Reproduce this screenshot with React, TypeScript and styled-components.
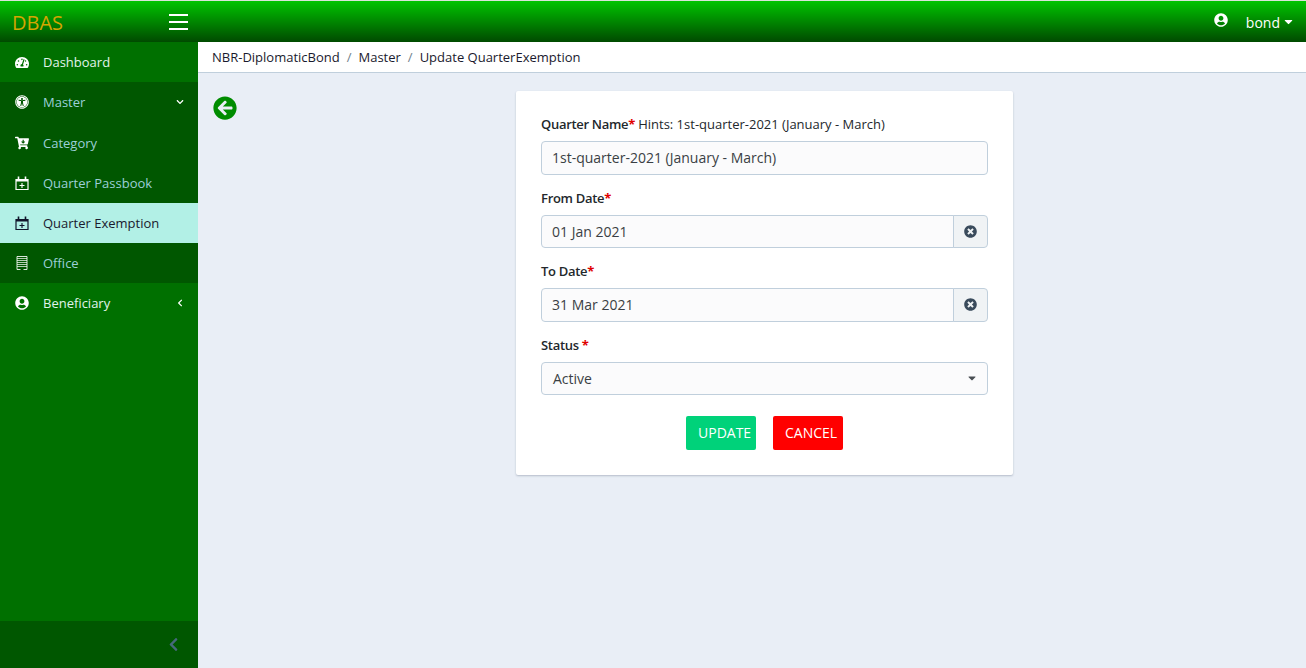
import React from 'react';
import styled, { createGlobalStyle } from 'styled-components';
import {
  FaArrowCircleLeft,
  FaCartArrowDown,
  FaCaretDown,
  FaChevronDown,
  FaChevronLeft,
  FaTachometerAlt,
  FaTimesCircle,
  FaUniversalAccess,
  FaUserCircle,
} from 'react-icons/fa';

const GlobalStyle = createGlobalStyle`
  * {
    box-sizing: border-box;
  }

  html,
  body {
    margin: 0;
    height: 100%;
    overflow: hidden;
  }

  body {
    background: #e9eef6;
    color: #23282c;
    font-family: 'Open Sans', sans-serif;
    font-size: 13px;
  }
`;

const Page = styled.div`
  display: flex;
  flex-direction: column;
  height: 668px;
`;

const Header = styled.header`
  display: flex;
  align-items: center;
  flex: 0 0 42px;
  border-top: 1px solid #d8e4d8;
  background: linear-gradient(to bottom, #00c400, #004a00);
`;

const Brand = styled.div`
  width: 169px;
  padding: 2px 0 0 12px;
  color: #d4a600;
  font-size: 20px;
`;

const Burger = styled.div`
  display: flex;
  flex-direction: column;
  gap: 5px;
  width: 19px;

  span {
    height: 2px;
    background: #fff;
  }
`;

const UserMenu = styled.div`
  display: flex;
  align-items: center;
  margin-left: auto;
  padding: 2px 11px 0 0;
  color: #fff;
  font-size: 14px;

  svg:first-child {
    margin: 0 18px 6px 0;
    font-size: 14px;
  }

  svg:last-child {
    margin: 0 0 2px 2px;
    font-size: 13px;
  }
`;

const Body = styled.div`
  display: flex;
  flex: 1;
  min-height: 0;
`;

const Sidebar = styled.aside`
  display: flex;
  flex-direction: column;
  flex: 0 0 198px;
  background: #007000;
`;

const NavItem = styled.div<{ $tone: 'plain' | 'dark' | 'active' }>`
  display: flex;
  align-items: center;
  height: 40px;
  padding: 0 14px 0 15px;
  background: ${(p) =>
    p.$tone === 'active' ? '#b2f0e6' : p.$tone === 'dark' ? '#005700' : 'transparent'};
  color: ${(p) =>
    p.$tone === 'active' ? '#1a1a2e' : p.$tone === 'dark' ? '#9ccfd8' : '#e0f4ec'};
  font-size: 13px;

  &:nth-child(3) {
    height: 41px;
    padding-top: 1px;
  }

  > svg:first-child {
    flex: 0 0 14px;
    margin-right: 14px;
    color: ${(p) => (p.$tone === 'active' ? '#10142a' : '#fff')};
    font-size: 14px;
  }

  > svg:last-child:not(:first-child) {
    margin-left: auto;
    color: #fff;
    font-size: 8px;
  }
`;

const DashboardIcon = styled(FaTachometerAlt)`
  && {
    flex: 0 0 15px;
    width: 15px;
    height: 15px;
    margin-right: 13px;
  }
`;

const Collapse = styled.div`
  display: flex;
  align-items: center;
  justify-content: flex-end;
  height: 47px;
  margin-top: auto;
  padding-right: 17px;
  background: #005700;
  color: #46687c;
  font-size: 15px;
`;

const Main = styled.main`
  display: flex;
  flex-direction: column;
  flex: 1;
  min-width: 0;
`;

const Breadcrumb = styled.nav`
  display: flex;
  align-items: center;
  flex: 0 0 31px;
  padding-left: 14px;
  border-bottom: 1px solid #c0cfdc;
  background: #fff;
  color: #1a1a2e;
  font-size: 13px;
`;

const Crumb = styled.span`
  & + &::before {
    content: '/';
    margin: 0 7px;
    color: #6f7f8c;
  }
`;

const Content = styled.div`
  display: grid;
  grid-template-columns: 303px 497px;
  padding: 18px 0 0 15px;
`;

const BackLink = styled.div`
  padding-top: 5px;
  color: #008c00;
  font-size: 24px;
  line-height: 0;
`;

const Card = styled.form`
  height: 384px;
  padding: 24px 25px 0;
  border-radius: 2px;
  background: #fff;
  box-shadow: 0 1px 2px rgba(60, 75, 100, 0.3);
`;

const Field = styled.div`
  margin-bottom: 14px;
`;

const Label = styled.label`
  display: block;
  height: 20px;
  margin-bottom: 6px;
  color: #23282c;
  font-size: 13px;
  font-weight: 600;
  letter-spacing: -0.3px;
  line-height: 18px;

  b {
    color: #e00000;
    font-weight: 700;
  }

  small {
    font-size: 13px;
    font-weight: 400;
    letter-spacing: 0;
  }
`;

const Input = styled.div<{ $joined?: boolean }>`
  display: flex;
  align-items: center;
  flex: 1;
  height: 33.5px;
  padding: 0 10px;
  border: 1px solid #c0cfdc;
  border-radius: ${(p) => (p.$joined ? '4px 0 0 4px' : '4px')};
  background: #fbfbfc;
  color: #3a3f44;
  font-size: 14px;
`;

const InputGroup = styled.div`
  display: flex;
`;

const Addon = styled.div`
  display: flex;
  align-items: center;
  justify-content: center;
  flex: 0 0 35px;
  margin-left: -1px;
  border: 1px solid #c0cfdc;
  border-radius: 0 4px 4px 0;
  background: #f0f3f5;
  color: #3a4b5c;
  font-size: 13px;
`;

const SelectBox = styled(Input)`
  justify-content: space-between;
  padding: 0 9px 0 11px;

  svg {
    color: #4a4f54;
    font-size: 12px;
  }
`;

const Actions = styled.div`
  display: flex;
  justify-content: center;
  gap: 17px;
  margin-top: 21px;
`;

const ActionButton = styled.button<{ $bg: string }>`
  width: 70px;
  height: 34px;
  padding: 0 0 2px 12px;
  border: 0;
  border-radius: 2px;
  background: ${(p) => p.$bg};
  color: #fff;
  font-family: inherit;
  font-size: 14px;
  text-align: left;
  white-space: nowrap;
`;

const CalendarIcon = () => (
  <svg width="14" height="14" viewBox="0 0 14 14" fill="none" stroke="currentColor">
    <path d="M1 3.5h12v10H1z" strokeWidth="1.2" />
    <path d="M1 4.5h12" strokeWidth="2" />
    <path d="M3.5 0.5v3M10.5 0.5v3" strokeWidth="1.6" />
    <path d="M4.5 9.5h5M7 7v5" strokeWidth="1.1" />
  </svg>
);

const OfficeIcon = () => (
  <svg width="14" height="14" viewBox="0 0 14 14" fill="none" stroke="currentColor">
    <path d="M2 .5h10v13H2z" strokeWidth="1" opacity="0.85" />
    <path
      d="M2 2.5h10M2 4.5h10M2 6.5h10M2 8.5h10M2 10.5h10"
      strokeWidth="1"
      opacity="0.7"
    />
    <path d="M5.5 13h3" strokeWidth="2" stroke="#005700" />
  </svg>
);

const App = () => {
  return (
    <Page>
      <GlobalStyle />
      <Header>
        <Brand>DBAS</Brand>
        <Burger>
          <span />
          <span />
          <span />
        </Burger>
        <UserMenu>
          <FaUserCircle />
          bond
          <FaCaretDown />
        </UserMenu>
      </Header>
      <Body>
        <Sidebar>
          <NavItem $tone="plain">
            <DashboardIcon />
            Dashboard
          </NavItem>
          <NavItem $tone="dark">
            <FaUniversalAccess />
            Master
            <FaChevronDown />
          </NavItem>
          <NavItem $tone="dark">
            <FaCartArrowDown />
            Category
          </NavItem>
          <NavItem $tone="dark">
            <CalendarIcon />
            Quarter Passbook
          </NavItem>
          <NavItem $tone="active">
            <CalendarIcon />
            Quarter Exemption
          </NavItem>
          <NavItem $tone="dark">
            <OfficeIcon />
            Office
          </NavItem>
          <NavItem $tone="plain">
            <FaUserCircle />
            Beneficiary
            <FaChevronLeft />
          </NavItem>
          <Collapse>
            <FaChevronLeft />
          </Collapse>
        </Sidebar>
        <Main>
          <Breadcrumb>
            <Crumb>NBR-DiplomaticBond</Crumb>
            <Crumb>Master</Crumb>
            <Crumb>Update QuarterExemption</Crumb>
          </Breadcrumb>
          <Content>
            <BackLink>
              <FaArrowCircleLeft />
            </BackLink>
            <Card>
              <Field>
                <Label>
                  Quarter Name<b>*</b> <small>Hints: 1st-quarter-2021 (January - March)</small>
                </Label>
                <Input>1st-quarter-2021 (January - March)</Input>
              </Field>
              <Field>
                <Label>
                  From Date<b>*</b>
                </Label>
                <InputGroup>
                  <Input $joined>01 Jan 2021</Input>
                  <Addon>
                    <FaTimesCircle />
                  </Addon>
                </InputGroup>
              </Field>
              <Field>
                <Label>
                  To Date<b>*</b>
                </Label>
                <InputGroup>
                  <Input $joined>31 Mar 2021</Input>
                  <Addon>
                    <FaTimesCircle />
                  </Addon>
                </InputGroup>
              </Field>
              <Field>
                <Label>
                  Status <b>*</b>
                </Label>
                <SelectBox>
                  Active
                  <FaCaretDown />
                </SelectBox>
              </Field>
              <Actions>
                <ActionButton type="button" $bg="#00d27a">
                  UPDATE
                </ActionButton>
                <ActionButton type="button" $bg="#ff0000">
                  CANCEL
                </ActionButton>
              </Actions>
            </Card>
          </Content>
        </Main>
      </Body>
    </Page>
  );
};

export default App;
